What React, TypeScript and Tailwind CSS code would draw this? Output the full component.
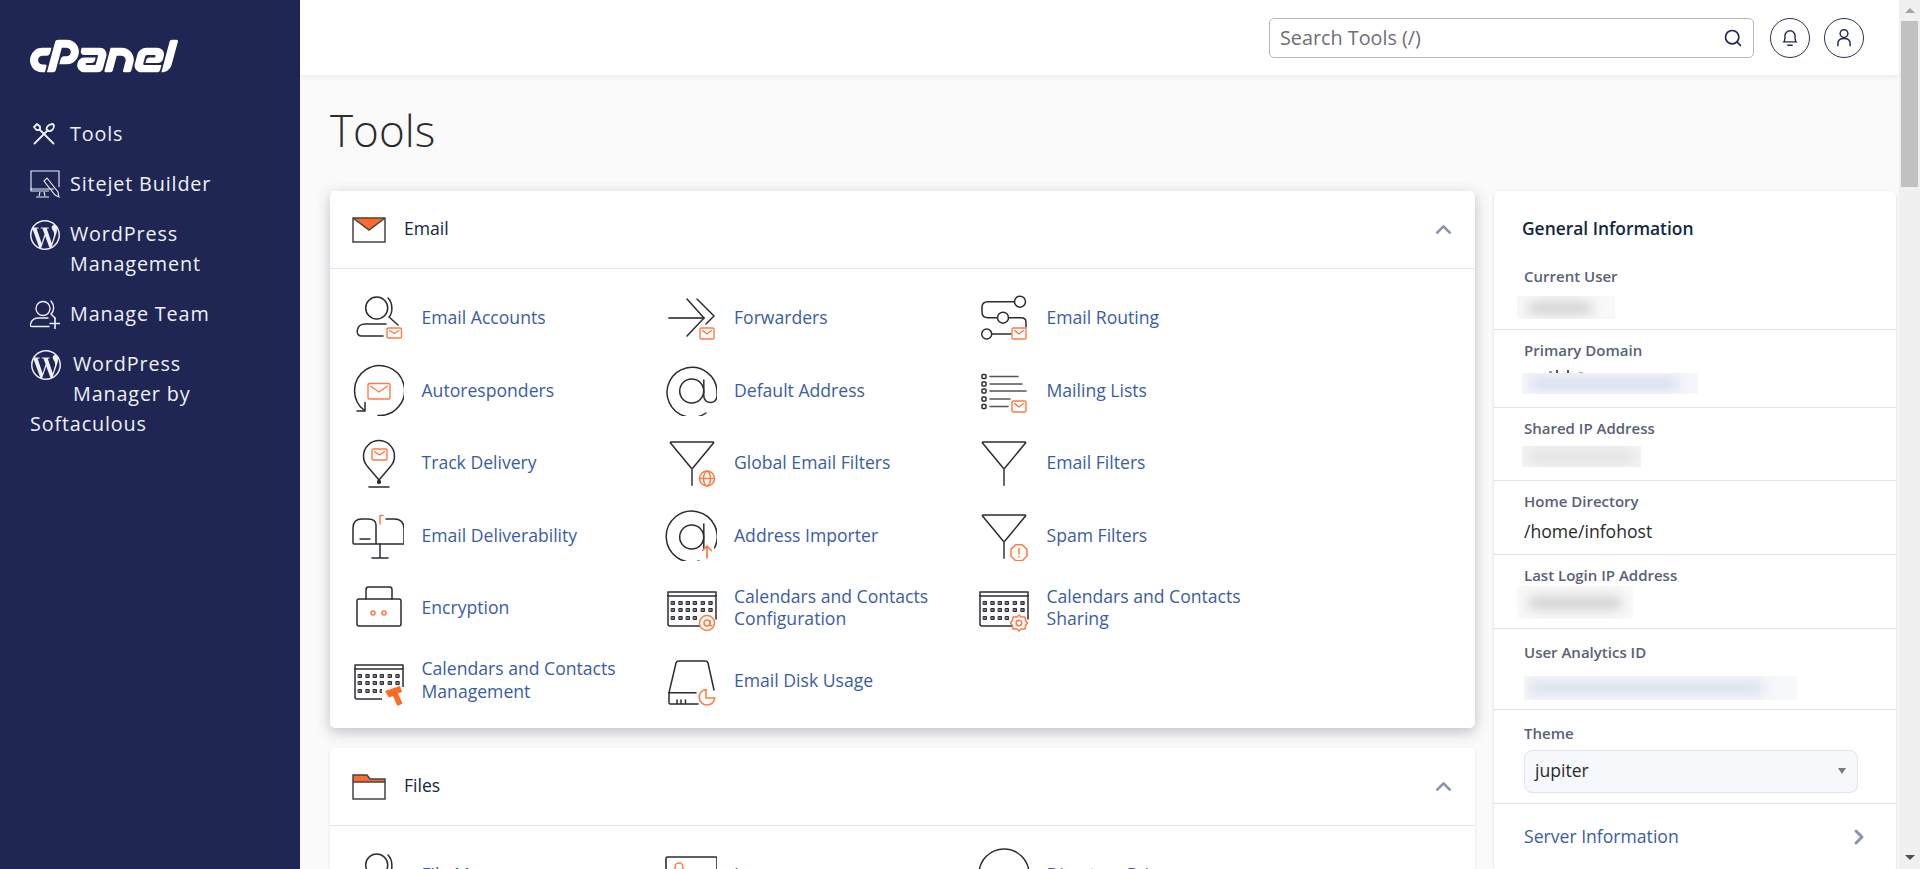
import type { ReactNode } from "react"
import { ChevronRight, ChevronUp, Search } from "lucide-react"
import { SiCpanel, SiWordpress } from "react-icons/si"

const INK = "#2b2b33"
const ORANGE = "#ff7a45"

function MiniMail({ x, y, w, h }: { x: number; y: number; w: number; h: number }) {
  return (
    <g fill="#fff" stroke={ORANGE} strokeWidth="1.4">
      <rect x={x} y={y} width={w} height={h} rx="1.5" />
      <path fill="none" d={`M${x + 2.5} ${y + 2.5} L${x + w / 2} ${y + h * 0.55} L${x + w - 2.5} ${y + 2.5}`} />
    </g>
  )
}

function Ico({ children }: { children: ReactNode }) {
  return (
    <svg viewBox="0 0 52 52" className="w-[52px] h-[52px] shrink-0" fill="none" stroke={INK} strokeWidth="1.5" strokeLinecap="round" strokeLinejoin="round">
      {children}
    </svg>
  )
}

function Person() {
  return (
    <>
      <circle cx="24.7" cy="17" r="11" />
      <path d="M36 7 C41 12 41 22 37 26 L46 34" />
      <path d="M31 45 H9 C3 45 4 33 13 33 H34" />
    </>
  )
}

function CalendarBase() {
  const rows = [22, 29, 37]
  const cols = [8, 15.7, 23, 30, 38, 45.7]
  return (
    <>
      <path d="M51 38 V11 H3 V43 Q3 45 5 45 H36" />
      <path d="M3 15 H51" />
      {rows.map((y, r) =>
        cols.map((x, c) =>
          r === 2 && c > 3 ? null : <rect key={`${r}-${c}`} x={x - 1.5} y={y - 1.5} width="3" height="3" fill="#777" strokeWidth="1" />,
        ),
      )}
    </>
  )
}

function Funnel({ children }: { children?: ReactNode }) {
  return (
    <>
      <path d="M6 6 H48 Q49 6 48.5 7 L27 33 L5.5 7 Q5 6 6 6 Z" />
      <path d="M27 33 V49" strokeWidth="1.8" stroke="#555" />
      {children}
    </>
  )
}

const emailTools: { label: ReactNode; icon: ReactNode }[] = [
  {
    label: "Email Accounts",
    icon: <Ico><Person /><MiniMail x={35} y={37} w={14.5} h={10} /></Ico>,
  },
  {
    label: "Forwarders",
    icon: (
      <Ico>
        <path d="M4 27 H39" strokeWidth="1.8" stroke="#555" />
        <path d="M22 8 L39 27 L22 45" />
        <path d="M32 8 L49 25 L41 33" />
        <MiniMail x={35} y={37} w={14} h={11} />
      </Ico>
    ),
  },
  {
    label: "Email Routing",
    icon: (
      <Ico>
        <circle cx="43" cy="10.7" r="5.5" />
        <path d="M37.5 10.7 H11 Q5 10.7 5 16 V21 Q5 26.7 11 26.7 H20.5" />
        <circle cx="26" cy="26.7" r="5.5" />
        <path d="M31.5 26.7 H44 Q49 26.7 49 31 V36" />
        <circle cx="9.7" cy="43" r="5" />
        <path d="M14.7 43 H34" />
        <MiniMail x={35} y={37} w={14} h={11} />
      </Ico>
    ),
  },
  {
    label: "Autoresponders",
    icon: (
      <Ico>
        <path d="M26 51.5 A25 25 0 1 0 12.5 46.5" />
        <path d="M5 47 H13 V38.5" />
        <MiniMail x={16} y={19.5} w={22} h={15.5} />
      </Ico>
    ),
  },
  {
    label: "Default Address",
    icon: (
      <Ico>
        <path d="M41 49 A25 25 0 1 1 52 27 V32 A6.6 6.6 0 0 1 38.8 32 V16" />
        <circle cx="26.7" cy="27" r="12" />
      </Ico>
    ),
  },
  {
    label: "Mailing Lists",
    icon: (
      <Ico>
        {[12.5, 20, 27, 35, 42.5].map((y) => (
          <rect key={y} x="5" y={y - 2} width="4" height="4" rx="1" />
        ))}
        <g stroke="#555" strokeWidth="1.6">
          <path d="M13 12.5 H41 M13 20 H45 M13 27 H49 M13 35 H33 M13 42.5 H31" />
        </g>
        <MiniMail x={35} y={37} w={14} h={11} />
      </Ico>
    ),
  },
  {
    label: "Track Delivery",
    icon: (
      <Ico>
        <path d="M27 44 L15.5 30.5 A15.5 15.5 0 1 1 38.5 30.5 Z" />
        <path d="M17 51 H37" />
        <circle cx="27" cy="46" r="1.4" fill={INK} />
        <MiniMail x={20} y={13} w={15} h={11} />
      </Ico>
    ),
  },
  {
    label: "Global Email Filters",
    icon: (
      <Ico>
        <Funnel />
        <g stroke={ORANGE}>
          <circle cx="42" cy="42.5" r="7.5" fill="#fff" />
          <ellipse cx="42" cy="42.5" rx="3.4" ry="7.5" />
          <path d="M34.5 42.5 H49.5" />
        </g>
      </Ico>
    ),
  },
  { label: "Email Filters", icon: <Ico><Funnel /></Ico> },
  {
    label: "Email Deliverability",
    icon: (
      <Ico>
        <path d="M24 35 V16 Q24 10 16 10 H10 Q1 10 1 19 V34 Q1 35 2 35 H51 Q52 35 52 34 V20 Q52 10 42 10 H34" />
        <path d="M8 30 H18" />
        <path d="M28 35 V49 M20 49 H36" />
        <path d="M28 15 V6.5 H31" stroke={ORANGE} />
      </Ico>
    ),
  },
  {
    label: "Address Importer",
    icon: (
      <Ico>
        <path d="M34 52 A25.5 25.5 0 1 1 49.5 39" />
        <circle cx="26.7" cy="28" r="12" />
        <path d="M38.8 15 V40" />
        <path d="M42 49 V37 M37.5 41.5 L42 37 L46.5 41.5" stroke={ORANGE} strokeWidth="1.7" />
      </Ico>
    ),
  },
  {
    label: "Spam Filters",
    icon: (
      <Ico>
        <Funnel />
        <g stroke={ORANGE}>
          <path fill="#fff" d="M38.7 35.7 H45.3 L50 40.4 V47 L45.3 51.7 H38.7 L34 47 V40.4 Z" />
          <path d="M42 39.5 V45 M42 47.5 V48" />
        </g>
      </Ico>
    ),
  },
  {
    label: "Encryption",
    icon: (
      <Ico>
        <rect x="5" y="18" width="44" height="27" rx="2" />
        <path d="M14 18 V8.5 Q14 6 16.5 6 H37.5 Q40 6 40 8.5 V18" />
        <circle cx="21" cy="32" r="2" stroke={ORANGE} />
        <circle cx="32" cy="32" r="2" stroke={ORANGE} />
      </Ico>
    ),
  },
  {
    label: "Calendars and Contacts Configuration",
    icon: (
      <Ico>
        <CalendarBase />
        <g stroke={ORANGE}>
          <circle cx="42" cy="42" r="7.5" fill="#fff" />
          <circle cx="42" cy="42" r="3" />
          <path d="M45 39.5 V43.5 Q45 45 47 44.5" />
        </g>
      </Ico>
    ),
  },
  {
    label: "Calendars and Contacts Sharing",
    icon: (
      <Ico>
        <CalendarBase />
        <g stroke={ORANGE}>
          <path fill="#fff" d="M42 34 L44 36 L48 36 L48.5 39.5 L50.5 42 L48.5 44.5 L48 48 L44 48 L42 50 L40 48 L36 48 L35.5 44.5 L33.5 42 L35.5 39.5 L36 36 L40 36 Z" />
          <circle cx="42" cy="42" r="2.8" />
        </g>
      </Ico>
    ),
  },
  {
    label: "Calendars and Contacts Management",
    icon: (
      <Ico>
        <CalendarBase />
        <path fill="#fff" stroke="none" d="M30 33 H52 V52 H30 Z" />
        <path fill="#ff6a20" stroke="none" d="M33 37 L48 32 L50 38 L46 39.5 L50.5 49.5 L45.5 52 L41 42 L37 43.5 Z" />
      </Ico>
    ),
  },
  {
    label: "Email Disk Usage",
    icon: (
      <Ico>
        <path d="M4 38.7 L11 9 Q11.5 7 14 7 H40 Q42.5 7 43 9 L49 36" />
        <path d="M4 38.7 H31" />
        <path d="M4 38.7 V49 Q4 50 5 50 H33" />
        <path d="M12 46 V49.5 M16 46 V49.5 M20.5 46 V49.5" />
        <g stroke={ORANGE}>
          <path fill="#fff" d="M41 35.5 A7.8 7.8 0 1 0 49.8 44 H41 Z" />
        </g>
      </Ico>
    ),
  },
]

const fileTools: { label: string; icon: ReactNode }[] = [
  { label: "File Manager", icon: <Ico><Person /></Ico> },
  {
    label: "Images",
    icon: (
      <Ico>
        <rect x="1" y="9" width="51" height="40" rx="1.5" strokeWidth="1.6" />
        <circle cx="14" cy="19" r="4" stroke={ORANGE} />
      </Ico>
    ),
  },
  {
    label: "Directory Privacy",
    icon: (
      <Ico>
        <circle cx="27" cy="26" r="25" />
      </Ico>
    ),
  },
]

function ToolGrid({ tools }: { tools: { label: ReactNode; icon: ReactNode }[] }) {
  return (
    <div className="grid grid-cols-[repeat(3,312.5px)] pl-[22px] pt-[12px] pb-[12px]">
      {tools.map((t, i) => (
        <a key={i} className="flex items-center h-[72.5px] gap-[17.5px]">
          {t.icon}
          <span className="max-w-[215px] text-[17.6px] leading-[22.5px] text-[#3a5ca8]">{t.label}</span>
        </a>
      ))}
    </div>
  )
}

function SectionCard({ title, icon, shadow, tools }: { title: string; icon: ReactNode; shadow: string; tools: { label: ReactNode; icon: ReactNode }[] }) {
  return (
    <section className={`bg-white rounded-[5px] ${shadow}`}>
      <div className="h-[78px] flex items-center pl-[22px] pr-[19px] border-b border-[#e4e7f0]">
        {icon}
        <h2 className="ml-[18px] mb-[2px] text-[17.6px] text-[#12263f]">{title}</h2>
        <ChevronUp className="ml-auto text-[#8a94ad]" size={25} strokeWidth={2.6} />
      </div>
      <ToolGrid tools={tools} />
    </section>
  )
}

function InfoRow({ label, className, children }: { label: string; className: string; children: ReactNode }) {
  return (
    <div className={`px-[30px] border-b border-[#e2e2e6] ${className}`}>
      <div className="text-[15px] leading-[20px] font-semibold text-[#5a6178]">{label}</div>
      {children}
    </div>
  )
}

function Blurred({ className, tone, inner }: { className: string; tone: string; inner: string }) {
  return (
    <div className={`overflow-hidden ${className}`}>
      <div className={`blur-[6px] ${tone} ${inner}`} />
    </div>
  )
}

function NavIcon({ children }: { children: ReactNode }) {
  return <span className="float-left w-[30px] h-[40px] mr-[10px] flex items-start pt-[1px]">{children}</span>
}

export default function App() {
  return (
    <div className="h-screen flex overflow-hidden bg-[#fafafa] font-['Open_Sans',sans-serif]">
      <aside className="w-[300px] shrink-0 bg-[#1f2654] text-[#eef0f6] px-[30px]">
        <div className="h-[31px] mt-[40px] flex items-center">
          <SiCpanel className="shrink-0 text-white" size={148} />
        </div>
        <nav className="w-[215px] mt-[38px] text-[19.8px] leading-[30px] tracking-[0.85px]">
          <div className="h-[50px] flex items-center">
            <svg viewBox="0 0 24 24" className="w-[24px] h-[24px] ml-[2px] mr-[14px]" fill="none" stroke="currentColor" strokeWidth="1.8" strokeLinecap="round" strokeLinejoin="round">
              <path d="M2 5 L5 2 L8 4.5 L8 7 L6.5 8 L4.5 8 Z" />
              <path d="M7.5 7.5 L21.5 21.5" />
              <path d="M22 3.5 C22 7 19.5 9.5 16.5 9 L14.5 7 C14.5 4.5 17.5 2 21 2 Z" />
              <path d="M15 9 L2.5 21.5" />
            </svg>
            Tools
          </div>
          <div className="h-[50px] flex items-center">
            <svg viewBox="0 0 30 29" className="w-[30px] h-[29px] mr-[10px]" fill="none" stroke="currentColor" strokeWidth="1.1">
              <path d="M24 19 H1 V1 H29 V17" />
              <path d="M1 18 V21 H19 M10 22 L9 26 M14 22 L15 26 M6 27 H19" />
              <path d="M17 8 L28 22 L29 27 L25 25 L14 11 Z" />
            </svg>
            Sitejet Builder
          </div>
          <div className="mt-[10px] mb-[10px] flow-root">
            <NavIcon><SiWordpress size={30} /></NavIcon>
            WordPress Management
          </div>
          <div className="h-[50px] flex items-center">
            <svg viewBox="0 0 30 30" className="w-[30px] h-[30px] mr-[10px]" fill="none" stroke="currentColor" strokeWidth="1.4" strokeLinecap="round">
              <circle cx="13" cy="9.5" r="7" />
              <path d="M21 2 C24.5 6 24.5 12 21 15 L25 19" />
              <path d="M19 27.5 H2 C0.5 27.5 0 27 0.5 25 C1.5 21 5 19 9 19 H18" />
              <path d="M25 19 V29.5 M20 24.5 H30" strokeWidth="1.6" />
            </svg>
            Manage Team
          </div>
          <div className="mt-[10px] flow-root">
            <NavIcon><span className="ml-[1px]"><SiWordpress size={30} /></span></NavIcon>
            <span className="ml-[3px]">WordPress</span> <span className="ml-[3px]">Manager by</span> Softaculous
          </div>
        </nav>
      </aside>

      <div className="flex-1 min-w-0 flex flex-col">
        <header className="h-[75px] shrink-0 bg-white shadow-[0_1px_6px_rgba(0,0,0,0.08)] flex items-center justify-end pr-[35px] relative">
          <div className="w-[485px] h-[40px] border border-[#b9b6c8] rounded-[5px] flex items-center pl-[10px] pr-[10px] text-[19.8px] text-[#6e6e78]">
            Search Tools (/)
            <Search className="ml-auto text-[#1f2654]" size={20} strokeWidth={2} />
          </div>
          <button className="ml-[16px] w-[40px] h-[40px] rounded-full border border-[#2a2f5c] flex items-center justify-center">
            <svg viewBox="0 0 18 18" className="w-[20px] h-[20px]" fill="none" stroke="#232a5a" strokeWidth="1.3" strokeLinecap="round">
              <path d="M3.5 12.5 H14.5 C13.5 11.5 13.5 10 13.5 7 A4.5 4.5 0 0 0 4.5 7 C4.5 10 4.5 11.5 3.5 12.5 Z" />
              <path d="M7 15.5 H11" />
            </svg>
          </button>
          <button className="ml-[14px] w-[40px] h-[40px] rounded-full border border-[#2a2f5c] flex items-center justify-center">
            <svg viewBox="0 0 18 18" className="w-[20px] h-[20px]" fill="none" stroke="#232a5a" strokeWidth="1.3" strokeLinecap="round">
              <circle cx="9" cy="5" r="3.5" />
              <path d="M3.5 16 V14 C3.5 11 6 9.5 9 9.5 C12 9.5 14.5 11 14.5 14 V16" />
            </svg>
          </button>
        </header>

        <main className="flex-1 min-h-0 overflow-hidden pl-[30px] pr-[3px]">
          <h1 className="h-[116px] pb-[6px] flex items-center text-[44px] font-light text-[#2b2b2b]">Tools</h1>
          <div className="flex items-start gap-[19px]">
            <div className="w-[1145px] shrink-0 flex flex-col gap-[20px]">
              <SectionCard
                title="Email"
                shadow="shadow-[0_4px_14px_rgba(50,60,80,0.3)]"
                tools={emailTools}
                icon={
                  <svg viewBox="0 0 34 26" className="w-[34px] h-[26px]">
                    <path d="M1 1 H33 L17 13 Z" fill="#ff6a2b" />
                    <path d="M1 1 H33 V25 H1 Z M1 1 L17 13 L33 1" fill="none" stroke="#444" strokeWidth="1.5" />
                  </svg>
                }
              />
              <SectionCard
                title="Files"
                shadow="shadow-[0_1px_3px_rgba(50,60,80,0.12)]"
                tools={fileTools}
                icon={
                  <svg viewBox="0 0 34 26" className="w-[34px] h-[26px]">
                    <path d="M1 1 H15 L18 5 H33 V8 H1 Z" fill="#ff6a2b" />
                    <path d="M1 25 V1 H15 L18 5 H33 V25 Z M1 8 H33" fill="none" stroke="#444" strokeWidth="1.5" />
                  </svg>
                }
              />
            </div>

            <div className="w-[402px] shrink-0 bg-white rounded-[5px] shadow-[0_1px_3px_rgba(50,60,80,0.2)]">
              <h3 className="h-[75px] pl-[28px] pt-[22px] text-[17.4px] leading-[30px] font-semibold text-[#12263f]">General Information</h3>
              <InfoRow label="Current User" className="h-[64px]">
                <Blurred className="-ml-[7px] mt-[10px] w-[98px] h-[23px] bg-[#f8f8f8]" tone="bg-[#cfcfcf]" inner="ml-[12px] mr-[24px] mt-[6px] h-[12px]" />
              </InfoRow>
              <InfoRow label="Primary Domain" className="h-[78px] pt-[10px]">
                <div className="mt-[10px] ml-[25px] flex gap-[4px] h-[3px]">
                  <span className="w-[3px] h-[2px] mt-[1px] bg-[#9a9aa5]" />
                  <span className="w-[2px] h-[3px] bg-[#555]" />
                  <span className="w-[2px] h-[3px] ml-[5px] bg-[#555]" />
                  <span className="w-[4px] h-[1px] mt-[2px] ml-[6px] bg-[#aaa]" />
                </div>
                <Blurred className="-ml-[2px] w-[176px] h-[21px] bg-[#f5f6fa]" tone="bg-[#d8deee]" inner="ml-[8px] mr-[20px] mt-[4px] h-[13px]" />
              </InfoRow>
              <InfoRow label="Shared IP Address" className="h-[73px] pt-[10px]">
                <Blurred className="-ml-[2px] mt-[8px] w-[119px] h-[21px] bg-[#f4f4f4]" tone="bg-[#e4e4e4]" inner="mx-[6px] mt-[3px] h-[15px]" />
              </InfoRow>
              <InfoRow label="Home Directory" className="h-[74px] pt-[10px]">
                <div className="mt-[9px] text-[17.6px] leading-[22px] text-[#2a2a2a]">/home/infohost</div>
              </InfoRow>
              <InfoRow label="Last Login IP Address" className="h-[74px] pt-[10px]">
                <Blurred className="-ml-[7px] mt-[1px] w-[116px] h-[33px] bg-[#f9f9f9]" tone="bg-[#d2d2d2]" inner="mx-[12px] mt-[10px] h-[14px]" />
              </InfoRow>
              <InfoRow label="User Analytics ID" className="h-[81px] pt-[13px]">
                <Blurred className="mt-[14px] w-[273px] h-[24px] bg-[#f7f8fb]" tone="bg-[#dde2ee]" inner="ml-[4px] mr-[34px] mt-[4px] h-[16px]" />
              </InfoRow>
              <InfoRow label="Theme" className="h-[94px] pt-[13px]">
                <div className="mt-[7px] w-[334px] h-[43px] pb-[2px] bg-[#f6f8fb] border border-[#e0e5ef] rounded-[8px] flex items-center pl-[10px] pr-[11px] text-[17.6px] text-[#2a2a2a]">
                  jupiter
                  <span className="ml-auto w-0 h-0 border-x-[4.5px] border-x-transparent border-t-[6px] border-t-[#7b7b7b]" />
                </div>
              </InfoRow>
              <div className="h-[68px] pb-[3px] pl-[30px] pr-[25px] flex items-center text-[17.6px] text-[#3a5ca8]">
                Server Information
                <ChevronRight className="ml-auto text-[#8a94ad]" size={24} strokeWidth={3} />
              </div>
            </div>
          </div>
        </main>
      </div>

      <div className="w-[21px] shrink-0 bg-[#f0f0f0] flex flex-col items-center relative">
        <span className="mt-[8px] w-0 h-0 border-x-[5px] border-x-transparent border-b-[5px] border-b-[#a3a3a3]" />
        <div className="mt-[8px] w-[17px] h-[166px] bg-[#c1c1c1]" />
        <span className="mt-auto mb-[9px] w-0 h-0 border-x-[5px] border-x-transparent border-t-[5px] border-t-[#505050]" />
      </div>
    </div>
  )
}
